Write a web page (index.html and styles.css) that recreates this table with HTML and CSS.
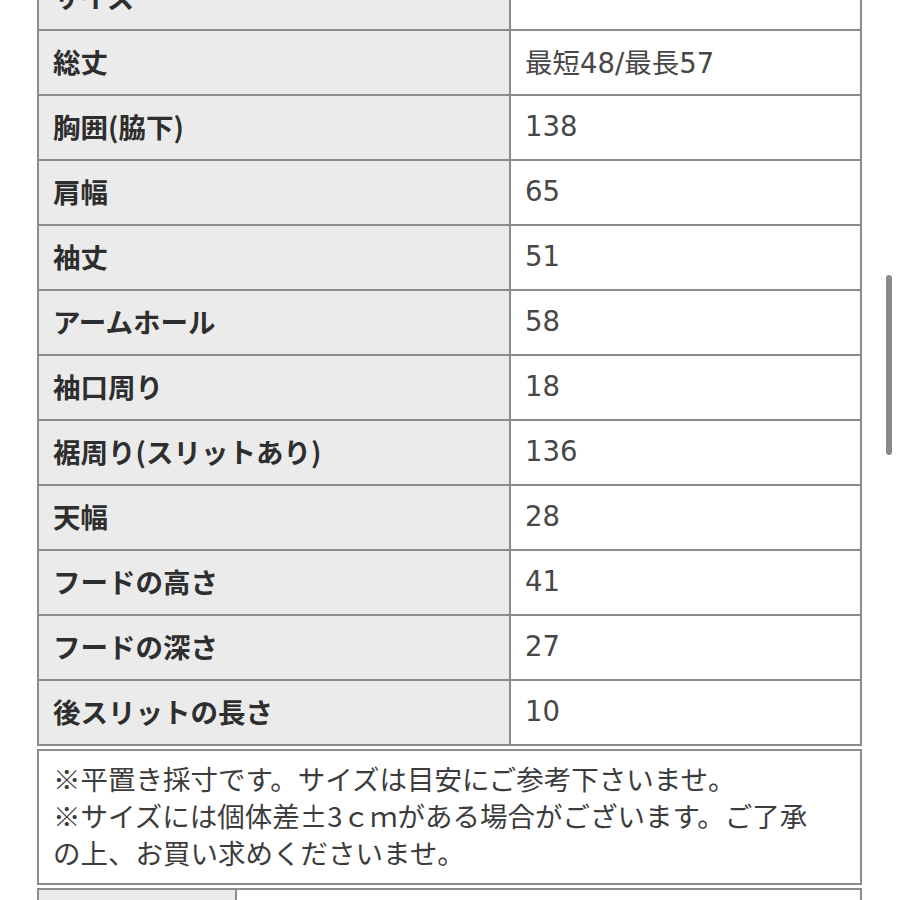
FILE: index.html
```html
<!DOCTYPE html>
<html lang="ja">
<head>
<meta charset="utf-8">
<link rel="stylesheet" href="styles.css">
</head>
<body>
<div class="page">
  <table class="size-table">
    <tr><th>サイズ</th><td></td></tr>
    <tr><th>総丈</th><td>最短48/最長57</td></tr>
    <tr><th>胸囲(脇下)</th><td>138</td></tr>
    <tr><th>肩幅</th><td>65</td></tr>
    <tr><th>袖丈</th><td>51</td></tr>
    <tr><th>アームホール</th><td>58</td></tr>
    <tr><th>袖口周り</th><td>18</td></tr>
    <tr><th>裾周り(スリットあり)</th><td>136</td></tr>
    <tr><th>天幅</th><td>28</td></tr>
    <tr><th>フードの高さ</th><td>41</td></tr>
    <tr><th>フードの深さ</th><td>27</td></tr>
    <tr><th>後スリットの長さ</th><td>10</td></tr>
  </table>
  <div class="note">※平置き採寸です。サイズは目安にご参考下さいませ。<br>※サイズには個体差±3ｃｍがある場合がございます。ご了承の上、お買い求めくださいませ。</div>
  <table class="next-table">
    <tr><th></th><td></td></tr>
  </table>
</div>
<div class="scrollbar"></div>
</body>
</html>
```
FILE: styles.css
```css
html, body {
  margin: 0;
  padding: 0;
  background: #ffffff;
}
body {
  font-family: "Noto Sans CJK JP", "Noto Sans", sans-serif;
  overflow: hidden;
}
.page {
  width: 825px;
  margin-left: 37px;
  margin-top: -36px;
}
.size-table {
  width: 100%;
  border-collapse: collapse;
  table-layout: fixed;
}
.size-table th,
.size-table td {
  border: 2px solid #8c8c8c;
  height: 65px;
  padding: 0 14px 4px;
  font-size: 27.5px;
  text-align: left;
  vertical-align: middle;
  box-sizing: border-box;
}
.size-table th {
  width: 472px;
  background: #ebebeb;
  color: #2e2e2e;
  font-weight: 700;
}
.size-table td {
  background: #ffffff;
  color: #474747;
  font-weight: 400;
  font-family: "DejaVu Sans", "Noto Sans CJK JP", sans-serif;
}
.note {
  margin-top: 3px;
  border: 2px solid #8c8c8c;
  padding: 9px 40px 12px 14px;
  font-size: 27.5px;
  line-height: 37px;
  color: #3c3c3c;
}
.next-table {
  width: 100%;
  margin-top: 3px;
  border-collapse: collapse;
  table-layout: fixed;
}
.next-table th,
.next-table td {
  border: 2px solid #8c8c8c;
  height: 60px;
}
.next-table th {
  width: 194px;
  background: #ebebeb;
}
.scrollbar {
  position: fixed;
  left: 886px;
  top: 275px;
  width: 6px;
  height: 180px;
  border-radius: 3px;
  background: #8a8a8a;
}
```
